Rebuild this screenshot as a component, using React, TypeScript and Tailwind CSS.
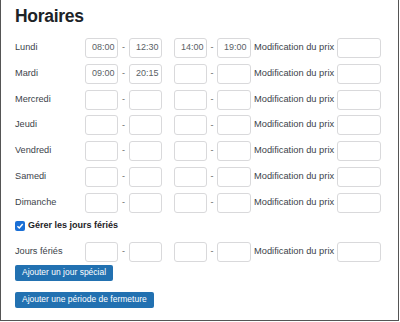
import React from "react";

const days: { name: string; v: string[] }[] = [
  { name: "Lundi", v: ["08:00", "12:30", "14:00", "19:00"] },
  { name: "Mardi", v: ["09:00", "20:15", "", ""] },
  { name: "Mercredi", v: ["", "", "", ""] },
  { name: "Jeudi", v: ["", "", "", ""] },
  { name: "Vendredi", v: ["", "", "", ""] },
  { name: "Samedi", v: ["", "", "", ""] },
  { name: "Dimanche", v: ["", "", "", ""] },
];

function Box({ value, w = "w-[33px]" }: { value: string; w?: string }) {
  return (
    <div
      className={`${w} h-[20px] border border-[#d9d9db] rounded-[3px] bg-white flex items-center pl-[6px] text-[9px] text-[#5a5f66] shrink-0`}
    >
      {value}
    </div>
  );
}

function Row({ name, v }: { name: string; v: string[] }) {
  return (
    <div className="flex items-center h-[20px]">
      <div className="w-[70px] text-[9.2px] text-[#3c434a] shrink-0">{name}</div>
      <Box value={v[0]} />
      <div className="w-[11px] text-center text-[9px] text-[#666]">-</div>
      <Box value={v[1]} />
      <div className="w-[12px]" />
      <Box value={v[2]} />
      <div className="w-[10px] text-center text-[9px] text-[#666]">-</div>
      <Box value={v[3]} w="w-[34px]" />
      <div className="w-[86px] pl-[3px] text-[9.3px] text-[#3c434a] whitespace-nowrap">
        Modification du prix
      </div>
      <Box value="" w="w-[44px]" />
    </div>
  );
}

export default function App() {
  return (
    <div
      className="w-[399px] h-[321px] border-l border-r border-b border-[#555] bg-white overflow-hidden"
      style={{ fontFamily: '"Liberation Sans", Arial, sans-serif' }}
    >
      <div className="pl-[14px] pt-[3px]">
        <div className="text-[17.5px] font-bold text-[#1d2327] leading-[26px] tracking-[-0.3px]">Horaires</div>
        <div className="mt-[9px] flex flex-col gap-[5.8px]">
          {days.map((d) => (
            <Row key={d.name} name={d.name} v={d.v} />
          ))}
        </div>
        <div className="flex items-center mt-[7px] h-[12px]">
          <div className="w-[10px] h-[10px] rounded-[2px] bg-[#1a6fd6] flex items-center justify-center">
            <svg width="8" height="8" viewBox="0 0 10 10">
              <path d="M1.8 5.2 L4.1 7.5 L8.4 2.4" stroke="white" strokeWidth="1.8" fill="none" />
            </svg>
          </div>
          <div className="ml-[3px] text-[9px] font-bold text-[#1d2327]">Gérer les jours fériés</div>
        </div>
        <div className="mt-[10px]">
          <Row name="Jours fériés" v={["", "", "", ""]} />
        </div>
        <div className="mt-[3px] flex">
          <div className="flex items-center h-[16px] px-[7px] rounded-[2px] bg-[#2271b1] text-white text-[8.5px]">
            Ajouter un jour spécial
          </div>
        </div>
        <div className="mt-[11px] flex">
          <div className="flex items-center h-[16px] px-[7px] rounded-[2px] bg-[#2271b1] text-white text-[8.5px]">
            Ajouter une période de fermeture
          </div>
        </div>
      </div>
    </div>
  );
}
